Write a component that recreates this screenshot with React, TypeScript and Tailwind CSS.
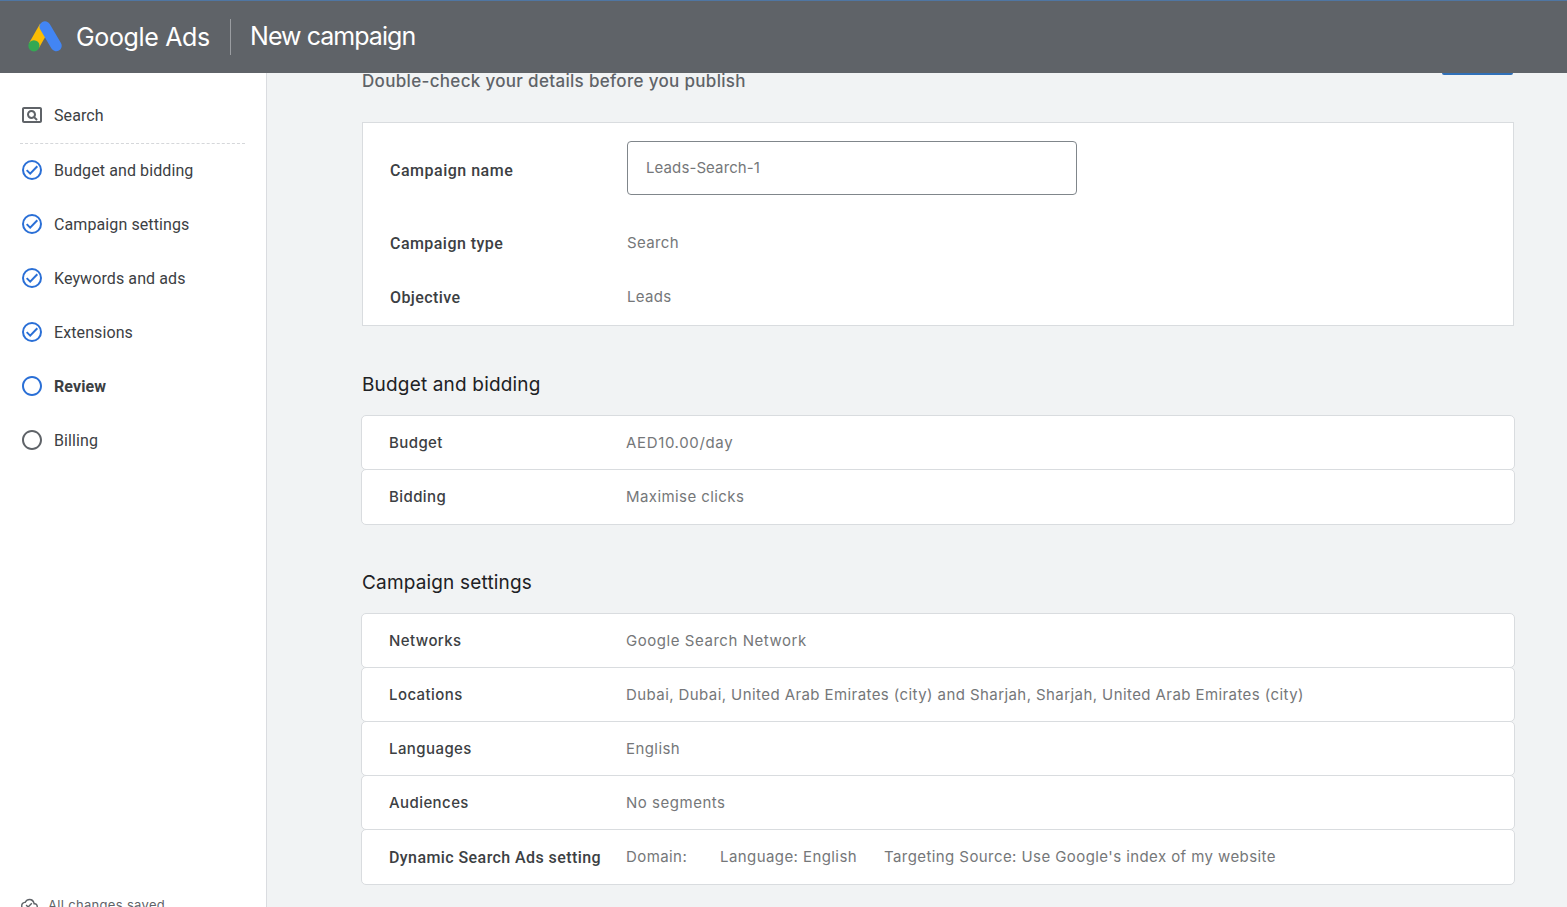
import type { ReactNode } from "react";
import { MdOutlineCloudDone, MdOutlinePageview, MdRadioButtonUnchecked } from "react-icons/md";

type StepState = "done" | "current" | "todo";

const steps: { label: string; state: StepState }[] = [
  { label: "Budget and bidding", state: "done" },
  { label: "Campaign settings", state: "done" },
  { label: "Keywords and ads", state: "done" },
  { label: "Extensions", state: "done" },
  { label: "Review", state: "current" },
  { label: "Billing", state: "todo" },
];

function AdsLogo() {
  return (
    <svg width="34" height="32" viewBox="0 0 34 32" fill="none">
      <path d="M16.8 5.6 6 24.5" stroke="#fbbc04" strokeWidth="11" />
      <path d="M17 5.7 28.2 24.8" stroke="#4285f4" strokeWidth="11" strokeLinecap="round" />
      <circle cx="5.9" cy="24.8" r="5.6" fill="#34a853" />
    </svg>
  );
}

function StepIcon({ state }: { state: StepState }) {
  if (state === "done") {
    return (
      <svg width="24" height="24" viewBox="0 0 24 24" fill="none" stroke="#2a6fd6" strokeWidth="2">
        <circle cx="12" cy="12" r="9" />
        <path d="m6.7 12.1 3.5 3.5 7.1-7.3" />
      </svg>
    );
  }
  return (
    <MdRadioButtonUnchecked
      size={24}
      className={state === "current" ? "text-[#2a6fd6]" : "text-[#5f6368]"}
    />
  );
}

function Row({
  label,
  labelClass = "font-['Inter'] text-[15px] font-medium tracking-[0.42px]",
  children,
}: {
  label: string;
  labelClass?: string;
  children: ReactNode;
}) {
  return (
    <div className="-mt-px flex h-[55px] items-center rounded-[5px] border border-[#d9dcdf] bg-white pl-[27px] pt-px first:mt-0 last:h-14 last:pt-0">
      <span className={`w-[237px] shrink-0 whitespace-nowrap text-[#3c4043] ${labelClass}`}>
        {label}
      </span>
      <div className="flex whitespace-nowrap font-['Inter'] text-[15px] tracking-[0.42px] text-[#757779]">
        {children}
      </div>
    </div>
  );
}

function Section({ title, children }: { title: string; children: ReactNode }) {
  return (
    <section>
      <h2 className="flex h-[88px] items-center pl-px pt-[29px] font-['Inter'] text-[19px] tracking-[0.17px] text-[#202124]">
        {title}
      </h2>
      <div>{children}</div>
    </section>
  );
}

export default function App() {
  return (
    <div className="flex h-[907px] w-[1567px] flex-col overflow-hidden bg-[#f1f3f4] font-['Roboto',sans-serif]">
      {/* Header */}
      <header className="flex h-[73px] shrink-0 items-center border-t border-[#4f76a3] bg-[#5f6368] pl-7 text-white">
        <AdsLogo />
        <span className="ml-[14px] w-[140px] whitespace-nowrap pt-0.5 font-['Inter'] text-[25px] tracking-[-0.35px]">
          Google Ads
        </span>
        <span className="ml-[14px] h-9 w-px bg-[#9a9da1]" />
        <h1 className="ml-[19px] font-['Inter'] text-[25px] tracking-[-0.95px]">
          New campaign
        </h1>
      </header>

      <div className="flex min-h-0 flex-1">
        {/* Steps */}
        <aside className="flex w-[267px] shrink-0 flex-col overflow-hidden border-r border-[#dadce0] bg-white text-base tracking-[0.1px] text-[#3c4043]">
          <div className="ml-5 flex h-[71px] w-[225px] shrink-0 items-center gap-[10px] border-b border-dashed border-[#d5d7da] pt-[13px]">
            <MdOutlinePageview size={24} className="text-[#5f6368]" />
            <span className="pt-0.5">Search</span>
          </div>
          <nav className="-mt-px shrink-0 pl-5">
            {steps.map((step) => (
              <div key={step.label} className="flex h-[54px] items-center gap-[10px]">
                <StepIcon state={step.state} />
                <span className={step.state === "current" ? "pt-0.5 font-bold" : "pt-0.5"}>
                  {step.label}
                </span>
              </div>
            ))}
          </nav>
          <div className="mt-[425px] flex h-6 shrink-0 items-center gap-[10px] pl-[21px] text-[#5f6368]">
            <MdOutlineCloudDone size={17} />
            <span className="pt-1 font-['Inter'] text-[13px] tracking-[0.32px]">
              All changes saved
            </span>
          </div>
        </aside>

        {/* Review */}
        <main className="min-w-0 flex-1 pl-[94px]">
          <div className="w-[1154px]">
            <div className="flex h-[49px] items-start justify-between px-px">
              <p className="-mt-1 font-['Inter'] text-[17px] font-medium tracking-[0.32px] text-[#5f6368]">
                Double-check your details before you publish
              </p>
              <div className="mr-px h-[2px] w-[71px] rounded-b-sm bg-[#3070b8]" />
            </div>

            <div className="mx-px mb-px flex h-[204px] flex-col border border-[#d9dcdf] bg-white pl-[27px] pt-[18px] text-base font-medium text-[#3c4043]">
              <div className="flex h-[54px] items-center">
                <span className="w-[237px] pt-1.5 tracking-[0.5px]">Campaign name</span>
                <div className="flex h-[54px] w-[450px] items-center rounded border border-[#80868b] pl-[18px] font-['Inter'] text-[15px] font-normal tracking-[0.1px] text-[#757779]">
                  Leads-Search-1
                </div>
              </div>
              <div className="mt-[21px] flex h-[54px] items-center">
                <span className="w-[237px] pt-0.5 tracking-[0.45px]">Campaign type</span>
                <span className="font-['Inter'] text-[15px] font-normal tracking-[0.35px] text-[#757779]">
                  Search
                </span>
              </div>
              <div className="flex h-[54px] items-center">
                <span className="w-[237px] pt-0.5 tracking-[0.4px]">Objective</span>
                <span className="font-['Inter'] text-[15px] font-normal tracking-[0.3px] text-[#757779]">
                  Leads
                </span>
              </div>
            </div>

            <Section title="Budget and bidding">
              <Row label="Budget">
                <span className="tracking-[0.65px]">AED10.00/day</span>
              </Row>
              <Row label="Bidding">Maximise clicks</Row>
            </Section>

            <Section title="Campaign settings">
              <Row label="Networks">
                <span className="tracking-[0.55px]">Google Search Network</span>
              </Row>
              <Row label="Locations">
                Dubai, Dubai, United Arab Emirates (city) and Sharjah, Sharjah, United Arab Emirates
                (city)
              </Row>
              <Row label="Languages">English</Row>
              <Row label="Audiences">
                <span className="tracking-[0.52px]">No segments</span>
              </Row>
              <Row
                label="Dynamic Search Ads setting"
                labelClass="pt-0.5 text-base font-medium tracking-[0.42px]"
              >
                <span className="w-[94px]">Domain:</span>
                <span className="w-[164px]">Language: English</span>
                <span>Targeting Source: Use Google's index of my website</span>
              </Row>
            </Section>
          </div>
        </main>
      </div>
    </div>
  );
}
